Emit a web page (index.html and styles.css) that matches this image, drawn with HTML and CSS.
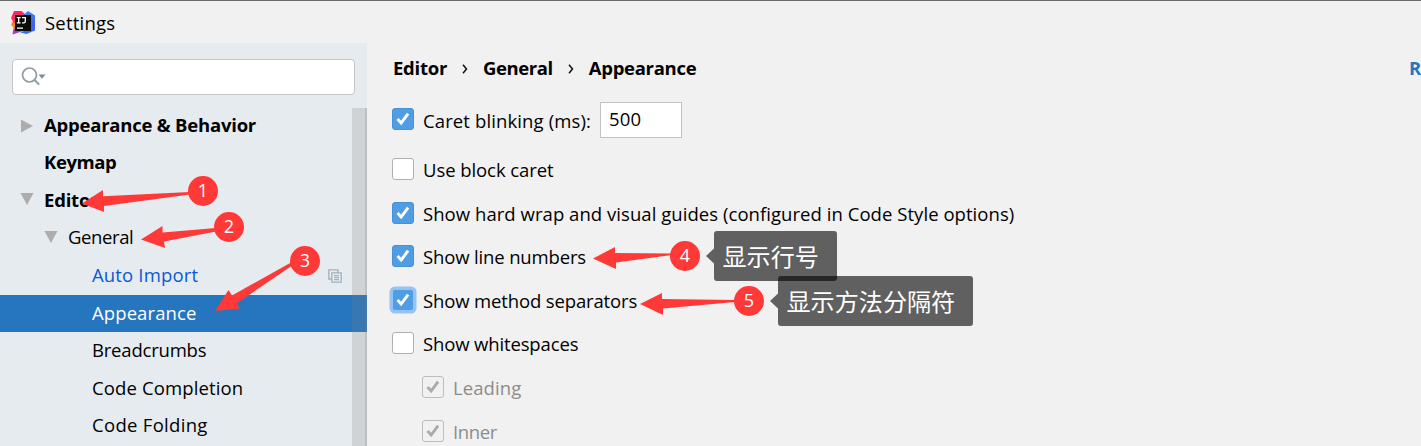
FILE: index.html
```html
<!DOCTYPE html>
<html lang="en">
<head>
<meta charset="utf-8">
<title>Settings</title>
<link rel="stylesheet" href="styles.css">
</head>
<body>
<svg width="0" height="0" class="defs">
  <symbol id="check" viewBox="0 0 22 22"><path d="M5 11 9 15.4 16.6 5.2" fill="none" stroke="currentColor" stroke-width="3.2"/></symbol>
  <symbol id="down" viewBox="0 0 14 12"><path d="M0.5 0H13.5L7 12Z" fill="#adadad"/></symbol>
</svg>
<div class="window">
  <header class="titlebar">
    <svg class="logo" viewBox="0 0 24 24">
      <defs>
        <linearGradient id="warm" x1="0" y1="0" x2="0" y2="1"><stop offset="0" stop-color="#fb2568"/><stop offset=".45" stop-color="#f9374f"/><stop offset=".56" stop-color="#f98b1d"/><stop offset=".7" stop-color="#f98b1d"/><stop offset=".78" stop-color="#b345b8"/><stop offset="1" stop-color="#8b3bd0"/></linearGradient>
        <linearGradient id="cool" x1="0" y1="0" x2="0" y2="1"><stop offset="0" stop-color="#3c83f5"/><stop offset=".6" stop-color="#4560ec"/><stop offset="1" stop-color="#3173ee"/></linearGradient>
      </defs>
      <path d="M3 0 10.500 0 14 3 12 20 1.500 23.500 2.500 17 0 13.500 2 10.500 0 7Z" fill="url(#warm)"/>
      <path d="M12.500 4 17 0 24 4.500V19.500L15.500 23 9 21.500 18 18Z" fill="url(#cool)"/>
      <rect x="4" y="4" width="16" height="16" fill="#0b0b0b"/>
      <path d="M5.8 6.6H9.6M7.7 6.6V11.8M5.8 11.9H9.6M11 6.6H14.3V10.5Q14.2 12 12.7 11.9H11M6 17.2H12" fill="none" stroke="#fff" stroke-width="1.3"/>
    </svg>
    <span class="t-settings">Settings</span>
  </header>
  <div class="content">
    <aside class="sidebar">
      <div class="search">
        <svg width="26" height="20" viewBox="0 0 26 20"><circle cx="8.5" cy="8" r="7" fill="none" stroke="#8c9ba3" stroke-width="1.7"/><path d="M13 12.5 18.2 17.6" stroke="#8c9ba3" stroke-width="2"/><path d="M17.5 7.5H24.5L21 11.7Z" fill="#7f8b92"/></svg>
      </div>
      <nav class="tree">
        <div class="node l0"><svg class="arrow" viewBox="0 0 14 14"><path d="M1 0.5 13 7 1 13.5Z" fill="#adadad"/></svg><span class="t-ab">Appearance &amp; Behavior</span></div>
        <div class="node l0"><i class="arrow"></i><span class="t-keymap">Keymap</span></div>
        <div class="node l0"><svg class="arrow open"><use href="#down"/></svg><span class="t-editor">Editor</span></div>
        <div class="node l1"><svg class="arrow open"><use href="#down"/></svg><span class="t-general">General</span></div>
        <div class="node l2 modified"><span class="t-auto">Auto Import</span>
          <svg class="copy" viewBox="0 0 14 14"><path d="M3.5 10H0.8V0.8H10V3.5M3.8 3.8H13.2V13.2H3.8ZM6 6.7H11M6 8.7H11M6 10.7H11" fill="none" stroke="#a3b1ba" stroke-width="1.3"/></svg></div>
        <div class="node l2 selected"><span class="t-appearance">Appearance</span></div>
        <div class="node l2"><span class="t-bread">Breadcrumbs</span></div>
        <div class="node l2"><span class="t-completion">Code Completion</span></div>
        <div class="node l2"><span class="t-folding">Code Folding</span></div>
      </nav>
      <div class="scrollbar"></div>
    </aside>
    <main class="page">
      <div class="crumbs">
        <span class="c-editor">Editor</span><svg class="chev" viewBox="0 0 6 10"><path d="M1 0.8 4.5 5 1 9.2" fill="none" stroke="#111" stroke-width="1.5"/></svg><span class="c-general">General</span><svg class="chev" viewBox="0 0 6 10"><path d="M1 0.8 4.5 5 1 9.2" fill="none" stroke="#111" stroke-width="1.5"/></svg><span class="c-app">Appearance</span>
        <span class="reset">R</span>
      </div>
      <div class="option caret"><svg class="box on"><use href="#check"/></svg><span class="t-caret">Caret blinking (ms):</span><div class="field">500</div></div>
      <div class="option"><i class="box"></i><span class="t-block">Use block caret</span></div>
      <div class="option"><svg class="box on"><use href="#check"/></svg><span class="t-wrap">Show hard wrap and visual guides (configured in Code Style options)</span></div>
      <div class="option"><svg class="box on"><use href="#check"/></svg><span class="t-line">Show line numbers</span></div>
      <div class="option"><svg class="box on focus"><use href="#check"/></svg><span class="t-method">Show method separators</span></div>
      <div class="option"><i class="box"></i><span class="t-white">Show whitespaces</span></div>
      <div class="option sub"><svg class="box off"><use href="#check"/></svg><span class="t-leading">Leading</span></div>
      <div class="option sub"><svg class="box off"><use href="#check"/></svg><span class="t-inner">Inner</span></div>
    </main>
  </div>
  <svg class="notes" width="1421" height="446" viewBox="0 0 1421 446">
    <g fill="#ff3838">
      <path d="M82 203.5 103 190V196.3L190 192V194.5L104 206V212Z"/><circle cx="203" cy="191" r="15"/>
      <path d="M141 239.5 162.500 226V232.500L216 228V231.500L164 241.500 165 248Z"/><circle cx="229" cy="227" r="15"/>
      <path d="M215 311 228.500 290 232 295.500 291 262.500 293 265 236.500 303.500 240 308.500Z"/><circle cx="305" cy="261" r="15"/>
      <path d="M593 258.500 615 247V253L672 253.500V255L616 262.500V269Z"/><circle cx="685" cy="256" r="15"/>
      <path d="M640 304 662 293V299L735 300V302L663 308.500V315Z"/><circle cx="749" cy="301" r="15"/>
    </g>
    <g fill="#000" fill-opacity=".6">
      <path d="M717 231H834Q837 231 837 234V278Q837 281 834 281H717Q714 281 714 278V263.500L706 256 714 248.500V234Q714 231 717 231Z"/>
      <path d="M781 276H970Q973 276 973 279V323Q973 326 970 326H781Q778 326 778 323V308.500L770 301 778 293.500V279Q778 276 781 276Z"/>
    </g>
    <g class="num"><text x="203" y="197">1</text><text x="229" y="233">2</text><text x="305" y="267">3</text><text x="685" y="262">4</text><text x="749" y="307">5</text></g>
    <g class="zh"><text x="722.500" y="266">显示行号</text><text x="786.500" y="311">显示方法分隔符</text></g>
  </svg>
</div>
</body>
</html>
```
FILE: styles.css
```css
* { box-sizing: border-box; }
body { margin: 0; overflow: hidden; background: #f1f1f1; color: #000; font: 18.5px/26px "Open Sans", "Noto Sans", sans-serif; }
.defs { position: absolute; }
span { white-space: nowrap; }
.window { position: relative; width: 1421px; height: 446px; overflow: hidden; border-top: 1px solid #6b6b6b; display: flex; flex-direction: column; }
.titlebar { height: 42px; flex: none; display: flex; align-items: center; gap: 10px; padding: 2px 0 0 11px; }
.logo { width: 24px; height: 24px; }
.content { display: flex; flex: 1; min-height: 0; }
.sidebar { position: relative; width: 367px; flex: none; background: #e6ebef; padding-top: 15.500px; overflow: hidden; }
.search { margin: 0 12px; height: 36px; border: 1px solid #c4c4c4; border-radius: 4px; background: #fff; display: flex; align-items: center; padding-left: 8px; }
.tree { padding-top: 12.500px; }
.node { height: 37.550px; display: flex; align-items: center; padding-left: 20px; }
.node span { padding-bottom: 2px; }
.l0 { font-weight: 700; }
.l1 { padding-left: 44px; }
.l2 { padding-left: 92px; }
.arrow { width: 14px; height: 14px; margin-right: 10px; flex: none; }
.open { height: 12px; margin-bottom: 3px; }
.modified { color: #0a58d8; }
.copy { width: 14px; height: 14px; margin-left: auto; margin-right: 25px; }
.selected { background: #2675bf; color: #fff; }
.scrollbar { position: absolute; left: 352px; top: 65px; width: 15px; bottom: 0; background: rgba(128,128,128,.22); border-right: 2px solid rgba(128,128,128,.22); }
.page { flex: 1; padding: 12px 0 0 25px; overflow: hidden; }
.crumbs { display: flex; align-items: center; height: 25px; font-weight: 700; padding-left: 1px; }
.chev { width: 6px; height: 10px; margin: 2px 15px 0; flex: none; }
.reset { margin-left: auto; width: 12px; color: #2675bf; }
.option { height: 43.550px; display: flex; align-items: center; gap: 9px; }
.option span { padding-top: 2px; }
.caret { height: 36px; margin: 22px 0 9.500px; }
.caret .box { margin-bottom: 2px; }
.sub { padding-left: 30px; color: #8c8c8c; }
.box { width: 22px; height: 22px; flex: none; border-radius: 3px; border: 1.500px solid #b0b0b0; background: #fff; }
.on { background: #4f9de4; border: 1px solid #4791d5; color: #fff; }
.off { background: #f1f1f1; border-color: #bdbdbd; color: #ababab; }
.focus { box-shadow: 0 0 0 2.500px #97c3f3; border-color: #97c3f3; }
.field { width: 82px; height: 36px; border: 1px solid #c2c2c2; background: #fff; padding: 3px 0 0 8px; letter-spacing: .2px; }
.t-settings { letter-spacing: .2px; }
.t-ab { letter-spacing: -.22px; }
.t-keymap { letter-spacing: -.4px; }
.t-editor { letter-spacing: -.2px; }
.t-general { letter-spacing: -.4px; }
.t-auto { letter-spacing: .16px; }
.t-appearance { letter-spacing: .1px; }
.t-bread { letter-spacing: -.2px; }
.t-completion { letter-spacing: .13px; }
.t-folding { letter-spacing: .3px; }
.c-editor { letter-spacing: -.25px; }
.c-general { letter-spacing: -.42px; }
.c-app { letter-spacing: -.3px; }
.t-caret { letter-spacing: .12px; }
.t-block { letter-spacing: -.07px; }
.t-wrap { letter-spacing: .05px; }
.t-line { letter-spacing: -.15px; }
.t-method { letter-spacing: -.14px; }
.t-white { letter-spacing: -.14px; }
.t-leading { letter-spacing: .1px; }
.t-inner { letter-spacing: -.4px; }
.notes { position: absolute; left: 0; top: -1px; }
.num { fill: #fff; font: 18px "Open Sans", sans-serif; text-anchor: middle; }
.zh { fill: #fff; font: 24.1px "Noto Sans CJK SC", sans-serif; }
```
